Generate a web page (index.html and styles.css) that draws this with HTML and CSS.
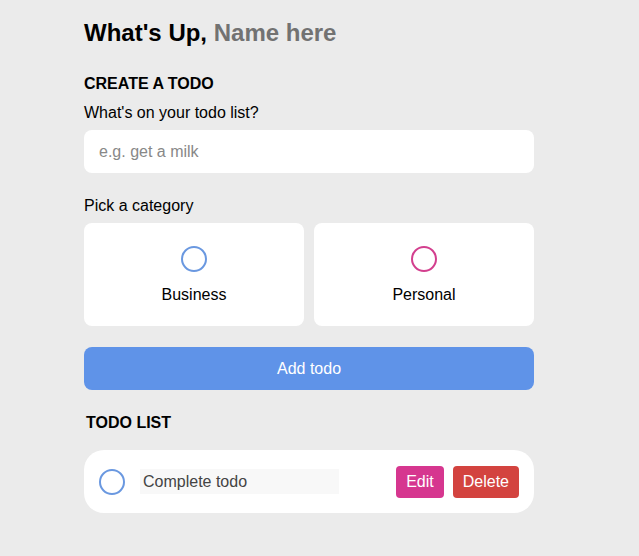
FILE: index.html
```html
<!DOCTYPE html>
<html lang="en">
<head>
<meta charset="utf-8">
<title>Todo</title>
<link rel="stylesheet" href="styles.css">
</head>
<body>
<main class="app">
  <h1 class="greeting">What's Up, <span class="name">Name here</span></h1>

  <section class="create">
    <h2 class="section-title">CREATE A TODO</h2>
    <p class="label">What's on your todo list?</p>
    <input class="todo-input" type="text" placeholder="e.g. get a milk">
    <p class="label pick">Pick a category</p>
    <div class="categories">
      <label class="category">
        <span class="bubble business"></span>
        <span class="cat-name">Business</span>
      </label>
      <label class="category">
        <span class="bubble personal"></span>
        <span class="cat-name">Personal</span>
      </label>
    </div>
    <button class="add-btn" type="button">Add todo</button>
  </section>

  <section class="list">
    <h2 class="section-title list-title">TODO LIST</h2>
    <div class="todo-item">
      <span class="bubble business"></span>
      <div class="todo-content">Complete todo</div>
      <div class="actions">
        <button class="edit" type="button">Edit</button>
        <button class="delete" type="button">Delete</button>
      </div>
    </div>
  </section>
</main>
</body>
</html>
```

FILE: styles.css
```css
* { box-sizing: border-box; }

html, body {
  margin: 0;
  padding: 0;
  background: #ebebeb;
  font-family: "Liberation Sans", Arial, sans-serif;
  color: #000;
}

.app {
  width: 450px;
  margin-left: 84px;
  padding-top: 19px;
}

.greeting {
  margin: 0;
  font-size: 24px;
  font-weight: 700;
  line-height: normal;
}

.name {
  color: #727272;
}

.create {
  margin-top: 28px;
}

.section-title {
  margin: 0;
  font-size: 16px;
  font-weight: 700;
  line-height: normal;
}

.label {
  margin: 11px 0 0;
  font-size: 16px;
  line-height: normal;
}

.todo-input {
  display: block;
  width: 100%;
  height: 43px;
  margin-top: 8px;
  border: none;
  border-radius: 8px;
  background: #fff;
  padding: 0 15px;
  font-family: inherit;
  font-size: 16px;
  color: #333;
  outline: none;
}

.todo-input::placeholder {
  color: #888;
}

.label.pick {
  margin-top: 24px;
}

.categories {
  display: grid;
  grid-template-columns: 1fr 1fr;
  gap: 10px;
  margin-top: 8px;
}

.category {
  display: flex;
  flex-direction: column;
  align-items: center;
  height: 103px;
  padding-top: 23px;
  background: #fff;
  border-radius: 8px;
}

.bubble {
  display: block;
  width: 26px;
  height: 26px;
  border-radius: 50%;
  border: 2px solid #6a98e0;
  flex: none;
}

.bubble.personal {
  border-color: #d33f8e;
}

.cat-name {
  margin-top: 14px;
  font-size: 16px;
  line-height: normal;
}

.add-btn {
  display: block;
  width: 100%;
  height: 43px;
  margin-top: 21px;
  border: none;
  border-radius: 8px;
  background: #5f93e8;
  color: #fff;
  font-family: inherit;
  font-size: 16px;
}

.list {
  margin-top: 24px;
}

.list-title {
  padding-left: 2px;
}

.todo-item {
  display: flex;
  align-items: center;
  height: 63px;
  margin-top: 18px;
  padding: 0 15px;
  background: #fff;
  border-radius: 20px;
}

.todo-content {
  width: 199px;
  height: 25px;
  margin-left: 15px;
  padding-left: 3px;
  background: #f8f8f8;
  color: #444;
  font-size: 16px;
  line-height: 25px;
}

.actions {
  display: flex;
  gap: 9px;
  margin-left: auto;
}

.actions button {
  height: 32px;
  border: none;
  border-radius: 4px;
  padding: 0 10px;
  color: #fff;
  font-family: inherit;
  font-size: 16px;
}

.edit {
  background: #d6368f;
  padding: 0 9.5px;
}

.delete {
  background: #d3433f;
}
```
